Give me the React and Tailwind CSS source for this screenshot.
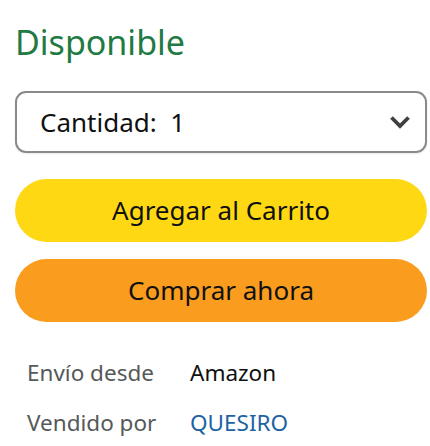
import React from "react";

export default function App() {
  return (
    <div className="w-[430px] h-[446px] bg-white pl-[15px] pr-[3px] pt-[21px] font-['Noto_Sans','Open_Sans',sans-serif]">
      {/* availability */}
      <h2 className="text-[34px] leading-[42px] text-[#1f7a43] ml-[0px]">Disponible</h2>

      {/* quantity select */}
      <div className="mt-[28px] h-[62px] border-2 border-[#8a8a8a] rounded-[11px] flex items-center justify-between pl-[23px] pr-[14px] shadow-[0_1px_2px_rgba(0,0,0,0.08)]">
        <span className="text-[26px] text-[#0f1111]">Cantidad:&nbsp; 1</span>
        <svg width="22" height="14" viewBox="0 0 22 14">
          <path d="M2.5 2.5 L11 11 L19.5 2.5" fill="none" stroke="#404040" strokeWidth="3.8" strokeLinejoin="miter" />
        </svg>
      </div>

      {/* buttons */}
      <div className="mt-[26px] flex flex-col gap-[17px]">
        <button className="h-[63px] rounded-full bg-[#FFD814] text-[26px] text-[#0f1111]">
          Agregar al Carrito
        </button>
        <button className="h-[63px] rounded-full bg-[#FA9C1E] text-[26px] text-[#0f1111]">
          Comprar ahora
        </button>
      </div>

      {/* shipping info */}
      <div className="mt-[34px] ml-[12px] grid grid-cols-[163px_1fr] gap-y-[16px] text-[22.5px] leading-[34px]">
        <span className="text-[#565959]">Envío desde</span>
        <span className="text-[#0f1111]">Amazon</span>
        <span className="text-[#565959]">Vendido por</span>
        <span className="text-[#2162a1]">QUESIRO</span>
      </div>
    </div>
  );
}
